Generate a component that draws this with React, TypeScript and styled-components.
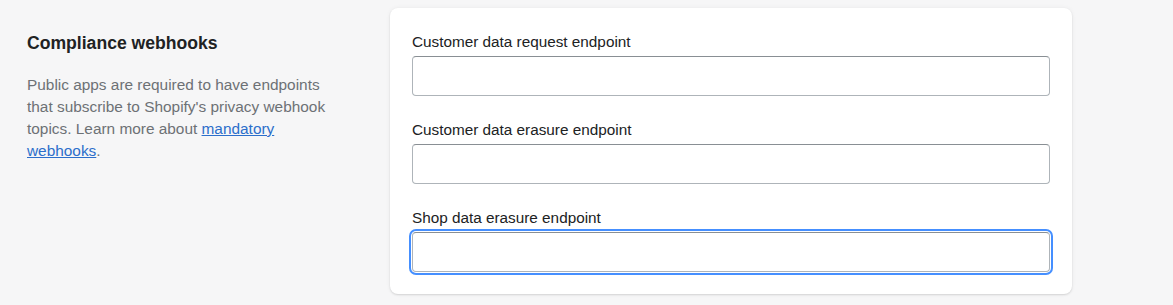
import React from "react";
import styled, { createGlobalStyle } from "styled-components";

const GlobalStyle = createGlobalStyle`
  html, body {
    margin: 0;
    padding: 0;
    background: #f6f6f7;
    font-family: "Liberation Sans", Arial, sans-serif;
  }
`;

const fields = [
  { id: "customer-request", label: "Customer data request endpoint" },
  { id: "customer-erasure", label: "Customer data erasure endpoint" },
  { id: "shop-erasure", label: "Shop data erasure endpoint", focused: true },
];

const App = () => {
  return (
    <>
      <GlobalStyle />
      <Page>
        <Annotation>
          <Heading>Compliance webhooks</Heading>
          <Description>
            Public apps are required to have endpoints that subscribe to
            Shopify's privacy webhook topics. Learn more about{" "}
            <a href="#">mandatory webhooks</a>.
          </Description>
        </Annotation>
        <Card>
          {fields.map((f) => (
            <Field key={f.id}>
              <Label htmlFor={f.id}>{f.label}</Label>
              <Input id={f.id} type="text" $focused={!!f.focused} />
            </Field>
          ))}
        </Card>
      </Page>
    </>
  );
};

const Page = styled.div`
  display: flex;
  align-items: flex-start;
  padding: 8px 0 11px 27px;
  min-height: 305px;
  box-sizing: border-box;
`;

const Annotation = styled.div`
  width: 363px;
  flex-shrink: 0;
  padding-top: 23px;
`;

const Heading = styled.h2`
  margin: 0;
  font-size: 17.6px;
  line-height: 24px;
  font-weight: 700;
  color: #202223;
`;

const Description = styled.p`
  margin: 19px 0 0;
  max-width: 312px;
  font-size: 15.4px;
  line-height: 22px;
  color: #6d7175;

  a {
    color: #2c6ecb;
    text-decoration: underline;
  }
`;

const Card = styled.div`
  width: 682px;
  box-sizing: border-box;
  background: #ffffff;
  border-radius: 8px;
  padding: 24px 22px 22px;
  display: flex;
  flex-direction: column;
  gap: 24px;
  box-shadow: 0 0 5px rgba(23, 24, 24, 0.05), 0 1px 2px rgba(0, 0, 0, 0.12);
`;

const Field = styled.div`
  display: flex;
  flex-direction: column;
  gap: 4px;
`;

const Label = styled.label`
  font-size: 15.3px;
  line-height: 20px;
  color: #202223;
`;

const Input = styled.input<{ $focused: boolean }>`
  height: 40px;
  box-sizing: border-box;
  width: 100%;
  border: 1px solid #aeb4b9;
  border-top-color: #898f94;
  border-radius: 4px;
  background: #fff;
  font: inherit;
  font-size: 15px;
  padding: 0 12px;
  outline: none;
  box-shadow: ${(p) =>
    p.$focused ? "0 0 0 1px #ffffff, 0 0 0 3px #458fff" : "none"};
`;

export default App;
